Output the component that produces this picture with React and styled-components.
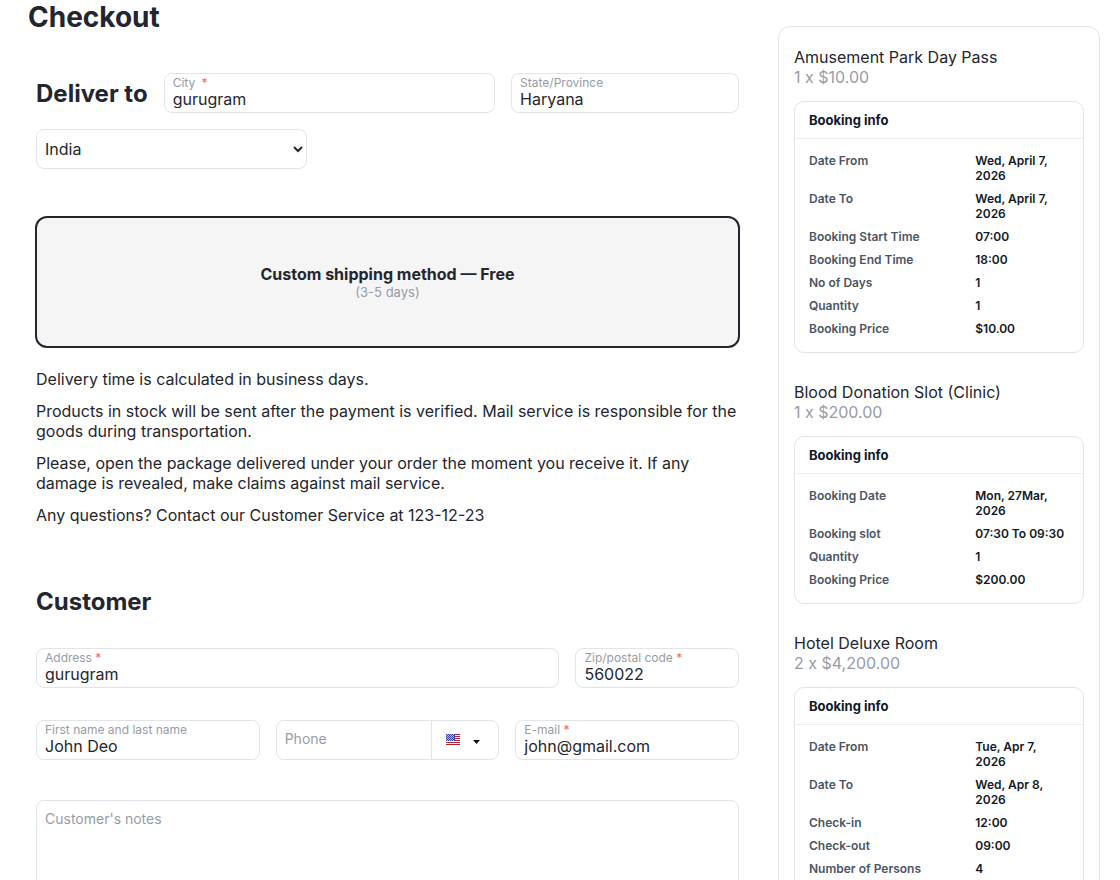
import React from 'react';
import styled, { createGlobalStyle } from 'styled-components';

const colors = {
    TEXT: '#23262f',
    MUTED: '#979ca8',
    BORDER: '#e1e4e8',
    LINE: '#eceff2',
    KEY: '#4b5563',
    VALUE: '#111827',
    REQUIRED: '#e4705e',
    SELECTED: '#f5f5f5'
}

const bookings = [
    {
        title: 'Amusement Park Day Pass',
        price: '1 x $10.00',
        info: [
            ['Date From', 'Wed, April 7, 2026'],
            ['Date To', 'Wed, April 7, 2026'],
            ['Booking Start Time', '07:00'],
            ['Booking End Time', '18:00'],
            ['No of Days', '1'],
            ['Quantity', '1'],
            ['Booking Price', '$10.00']
        ]
    },
    {
        title: 'Blood Donation Slot (Clinic)',
        price: '1 x $200.00',
        info: [
            ['Booking Date', 'Mon, 27Mar, 2026'],
            ['Booking slot', '07:30 To 09:30'],
            ['Quantity', '1'],
            ['Booking Price', '$200.00']
        ]
    },
    {
        title: 'Hotel Deluxe Room',
        price: '2 x $4,200.00',
        info: [
            ['Date From', 'Tue, Apr 7, 2026'],
            ['Date To', 'Wed, Apr 8, 2026'],
            ['Check-in', '12:00'],
            ['Check-out', '09:00'],
            ['Number of Persons', '4']
        ]
    }
]

export default function App(){
    return(
        <>
            <GlobalStyle/>
            <Page>
                <Main>
                    <PageTitle>Checkout</PageTitle>
                    <FieldRow $columns="auto minmax(0, 16fr) minmax(0, 11fr)">
                        <SectionTitle>Deliver to</SectionTitle>
                        <TextField id="city" label="City" value="gurugram" required spaced/>
                        <TextField id="state" label="State/Province" value="Haryana"/>
                    </FieldRow>
                    <CountrySelect aria-label="Country" defaultValue="India">
                        <option>India</option>
                        <option>United States</option>
                    </CountrySelect>
                    <Shipping>
                        <input type="radio" name="shipping" defaultChecked/>
                        <strong>Custom shipping method — Free</strong>
                        <small>(3-5 days)</small>
                    </Shipping>
                    <Notice>
                        <p>Delivery time is calculated in business days.</p>
                        <p>Products in stock will be sent after the payment is verified. Mail service is responsible for the goods during transportation.</p>
                        <p>Please, open the package delivered under your order the moment you receive it. If any damage is revealed, make claims against mail service.</p>
                        <p>Any questions? Contact our Customer Service at 123-12-23</p>
                    </Notice>
                    <Customer>
                        <SectionTitle>Customer</SectionTitle>
                        <FieldRow $columns="minmax(0, 16fr) minmax(0, 5fr)">
                            <TextField id="address" label="Address" value="gurugram" required/>
                            <TextField id="zip" label="Zip/postal code" value="560022" required/>
                        </FieldRow>
                        <FieldRow $columns="repeat(3, minmax(0, 1fr))">
                            <TextField id="name" label="First name and last name" value="John Deo"/>
                            <PhoneBox>
                                <input type="tel" placeholder="Phone" aria-label="Phone"/>
                                <button type="button" aria-label="Country code">
                                    <Flag/>
                                    <Caret viewBox="0 0 7 4"><path d="M0 0h7L3.5 4z"/></Caret>
                                </button>
                            </PhoneBox>
                            <TextField id="email" label="E-mail" value="john@gmail.com" required/>
                        </FieldRow>
                        <Notes placeholder="Customer's notes" aria-label="Customer's notes"/>
                    </Customer>
                </Main>
                <Summary>
                    {bookings.map(b => <Booking key={b.title} {...b}/>)}
                </Summary>
            </Page>
        </>
    )
}

function TextField(props){
    return(
        <Field>
            <FieldLabel htmlFor={props.id} $spaced={props.spaced}>
                {props.label} {props.required && <span>*</span>}
            </FieldLabel>
            <input id={props.id} defaultValue={props.value}/>
        </Field>
    )
}

function Booking(props){
    return(
        <Product>
            <ProductName>{props.title}</ProductName>
            <ProductPrice>{props.price}</ProductPrice>
            <InfoCard>
                <InfoTitle>Booking info</InfoTitle>
                <InfoList>
                    {props.info.map(([name, value]) => (
                        <InfoRow key={name}>
                            <dt>{name}</dt>
                            <dd>{value}</dd>
                        </InfoRow>
                    ))}
                </InfoList>
            </InfoCard>
        </Product>
    )
}

function Flag(){
    return(
        <svg width="14" height="11" viewBox="0 0 14 11" shapeRendering="crispEdges">
            <rect width="14" height="11" fill="#fff"/>
            {[0, 2, 4, 6, 8, 10].map(y => <rect key={y} y={y} width="14" height="1" fill="#b3222e"/>)}
            <rect width="9" height="7" fill="#3a45ac"/>
            {[0, 1, 2, 3, 4, 5, 6].map(y => [0, 2, 4, 6].map(x => (
                <rect key={x + '-' + y} x={x + 1 - y % 2} y={y} width="1" height="1" fill="#a9b1e6"/>
            )))}
        </svg>
    )
}

const GlobalStyle = createGlobalStyle`
    * {
        box-sizing: border-box;
    }
    body {
        margin: 0;
        background-color: #fff;
        color: ${colors.TEXT};
        font-family: Inter, sans-serif;
        font-size: 16px;
        line-height: 20px;
    }
    h1, h2, h3, h4, p, dl, dd {
        margin: 0;
    }
    input, select, textarea, button {
        color: inherit;
        font-family: inherit;
        font-size: 16px;
    }
    input::placeholder, textarea::placeholder {
        color: ${colors.MUTED};
        font-size: 14px;
        opacity: 1;
    }
`

const Page = styled.div`
    display: grid;
    grid-template-columns: minmax(0, 1fr) 322px;
    align-items: start;
    gap: 39px;
    padding: 0 20px 0 28px;
`

const Main = styled.main`
    display: flex;
    flex-direction: column;
    padding-left: 8px;
`

const PageTitle = styled.h1`
    margin: 0 0 39px -8px;
    font-size: 28px;
    font-weight: 700;
    line-height: 34px;
`

const SectionTitle = styled.h2`
    font-size: 24px;
    font-weight: 700;
    line-height: 29px;
    white-space: nowrap;
`

const FieldRow = styled.div`
    display: grid;
    grid-template-columns: ${props => props.$columns};
    align-items: center;
    gap: 16px;
`

const Field = styled.div`
    display: flex;
    flex-direction: column;
    height: 40px;
    padding: 2px 8px;
    border: 1px solid ${colors.BORDER};
    border-radius: 8px;
    input {
        width: 100%;
        height: 18px;
        padding: 0;
        border: none;
        outline: none;
        background: none;
    }
`

const FieldLabel = styled.label`
    color: ${colors.MUTED};
    font-size: 12px;
    line-height: 14px;
    white-space: nowrap;
    span {
        margin-left: ${props => props.$spaced ? '3px' : '0'};
        color: ${colors.REQUIRED};
    }
`

const CountrySelect = styled.select`
    width: 271px;
    height: 40px;
    margin-top: 16px;
    padding: 0 4px;
    border: 1px solid ${colors.BORDER};
    border-radius: 8px;
    background-color: #fff;
`

const Shipping = styled.label`
    display: flex;
    flex-direction: column;
    align-items: center;
    justify-content: center;
    min-height: 132px;
    margin: 47px -1px 21px;
    border: 2px solid ${colors.TEXT};
    border-radius: 12px;
    background-color: ${colors.SELECTED};
    input {
        position: absolute;
        opacity: 0;
    }
    strong {
        font-weight: 700;
    }
    small {
        color: ${colors.MUTED};
        font-size: 13px;
        line-height: 16px;
    }
`

const Notice = styled.div`
    display: flex;
    flex-direction: column;
    gap: 12px;
`

const Customer = styled.section`
    display: flex;
    flex-direction: column;
    gap: 32px;
    margin-top: 62px;
`

const PhoneBox = styled.div`
    display: flex;
    height: 40px;
    border: 1px solid ${colors.BORDER};
    border-radius: 8px;
    input {
        flex: 1;
        min-width: 0;
        padding: 0 8px 4px;
        border: none;
        outline: none;
        background: none;
    }
    button {
        display: flex;
        align-items: center;
        gap: 13px;
        width: 67px;
        padding: 0 14px 2px;
        border: none;
        border-left: 1px solid ${colors.BORDER};
        background: none;
    }
`

const Caret = styled.svg`
    width: 7px;
    height: 4px;
    margin-top: 6px;
    fill: #111;
`

const Notes = styled.textarea`
    width: 100%;
    height: 120px;
    margin-top: 8px;
    padding: 9px 8px;
    border: 1px solid ${colors.BORDER};
    border-radius: 8px;
    resize: none;
`

const Summary = styled.aside`
    display: flex;
    flex-direction: column;
    gap: 29px;
    margin-top: 26px;
    padding: 20px 15px;
    border: 1px solid ${colors.BORDER};
    border-radius: 12px;
`

const Product = styled.article`
    display: flex;
    flex-direction: column;
`

const ProductName = styled.h3`
    font-size: 16px;
    font-weight: 400;
`

const ProductPrice = styled.p`
    color: ${colors.MUTED};
`

const InfoCard = styled.div`
    margin-top: 14px;
    border: 1px solid ${colors.BORDER};
    border-radius: 10px;
`

const InfoTitle = styled.h4`
    padding: 10px 14px;
    border-bottom: 1px solid ${colors.LINE};
    color: ${colors.VALUE};
    font-size: 13px;
    font-weight: 700;
    line-height: 16px;
`

const InfoList = styled.dl`
    display: flex;
    flex-direction: column;
    gap: 8px;
    padding: 14px 14px 16px;
    font-size: 12px;
    font-weight: 600;
    line-height: 15px;
`

const InfoRow = styled.div`
    display: grid;
    grid-template-columns: 5fr 3fr;
    gap: 10px;
    dt {
        color: ${colors.KEY};
    }
    dd {
        color: ${colors.VALUE};
    }
`
